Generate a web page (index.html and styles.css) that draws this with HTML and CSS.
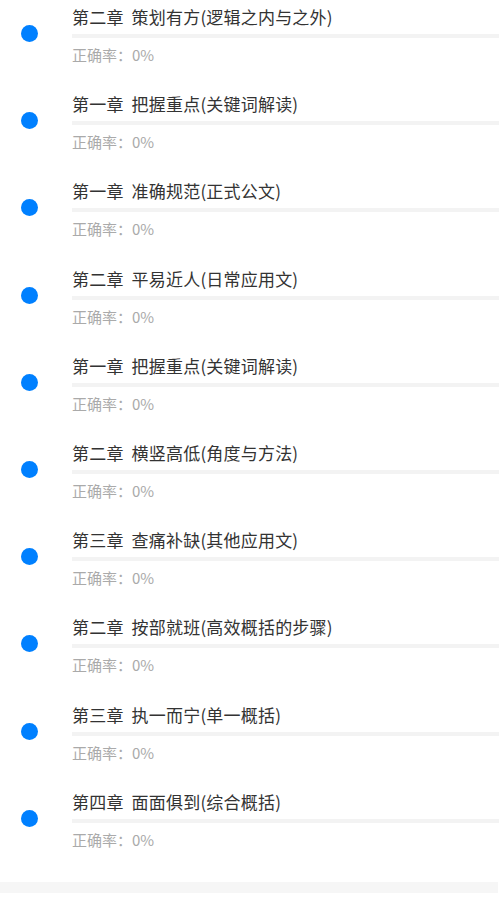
FILE: index.html
```html
<!DOCTYPE html>
<html lang="zh-CN">
<head>
  <meta charset="UTF-8" />
  <meta name="viewport" content="width=device-width, initial-scale=1.0"/>
  <title>章节练习</title>
  <link rel="stylesheet" href="styles.css">
</head>
<body>
  <ul class="chapter-list">
    <li class="chapter">
      <span class="dot"></span>
      <div class="info">
        <div class="title">第二章 策划有方(逻辑之内与之外)</div>
        <div class="bar"><div class="fill" style="width: 0%"></div></div>
        <div class="rate">正确率：0%</div>
      </div>
    </li>
    <li class="chapter">
      <span class="dot"></span>
      <div class="info">
        <div class="title">第一章 把握重点(关键词解读)</div>
        <div class="bar"><div class="fill" style="width: 0%"></div></div>
        <div class="rate">正确率：0%</div>
      </div>
    </li>
    <li class="chapter">
      <span class="dot"></span>
      <div class="info">
        <div class="title">第一章 准确规范(正式公文)</div>
        <div class="bar"><div class="fill" style="width: 0%"></div></div>
        <div class="rate">正确率：0%</div>
      </div>
    </li>
    <li class="chapter">
      <span class="dot"></span>
      <div class="info">
        <div class="title">第二章 平易近人(日常应用文)</div>
        <div class="bar"><div class="fill" style="width: 0%"></div></div>
        <div class="rate">正确率：0%</div>
      </div>
    </li>
    <li class="chapter">
      <span class="dot"></span>
      <div class="info">
        <div class="title">第一章 把握重点(关键词解读)</div>
        <div class="bar"><div class="fill" style="width: 0%"></div></div>
        <div class="rate">正确率：0%</div>
      </div>
    </li>
    <li class="chapter">
      <span class="dot"></span>
      <div class="info">
        <div class="title">第二章 横竖高低(角度与方法)</div>
        <div class="bar"><div class="fill" style="width: 0%"></div></div>
        <div class="rate">正确率：0%</div>
      </div>
    </li>
    <li class="chapter">
      <span class="dot"></span>
      <div class="info">
        <div class="title">第三章 查痛补缺(其他应用文)</div>
        <div class="bar"><div class="fill" style="width: 0%"></div></div>
        <div class="rate">正确率：0%</div>
      </div>
    </li>
    <li class="chapter">
      <span class="dot"></span>
      <div class="info">
        <div class="title">第二章 按部就班(高效概括的步骤)</div>
        <div class="bar"><div class="fill" style="width: 0%"></div></div>
        <div class="rate">正确率：0%</div>
      </div>
    </li>
    <li class="chapter">
      <span class="dot"></span>
      <div class="info">
        <div class="title">第三章 执一而宁(单一概括)</div>
        <div class="bar"><div class="fill" style="width: 0%"></div></div>
        <div class="rate">正确率：0%</div>
      </div>
    </li>
    <li class="chapter">
      <span class="dot"></span>
      <div class="info">
        <div class="title">第四章 面面俱到(综合概括)</div>
        <div class="bar"><div class="fill" style="width: 0%"></div></div>
        <div class="rate">正确率：0%</div>
      </div>
    </li>
  </ul>
  <div class="bottom-strip"></div>
</body>
</html>
```

FILE: styles.css
```css
body {
  margin: 0;
  background: #fff;
  font-family: "Noto Sans CJK SC", "Noto Sans", sans-serif;
}

.chapter-list {
  list-style: none;
  margin: 0;
  padding: 0 0 10px 0;
}

.chapter {
  display: flex;
  align-items: flex-start;
  height: 87.2px;
  box-sizing: border-box;
  padding-top: 6px;
}

.dot {
  flex: none;
  width: 17px;
  height: 17px;
  border-radius: 50%;
  background: #0080ff;
  margin: 19px 0 0 21px;
}

.info {
  flex: 1;
  margin-left: 34px;
}

.title {
  font-size: 17px;
  line-height: 22px;
  word-spacing: 4px;
  letter-spacing: 0.2px;
  color: #333;
}

.bar {
  height: 4px;
  margin-top: 6px;
  background: #f3f3f3;
}

.fill {
  height: 100%;
  background: #0080ff;
}

.rate {
  margin-top: 7px;
  font-size: 15px;
  line-height: 20px;
  color: #aaa;
}

.bottom-strip {
  width: 498px;
  height: 11px;
  background: #f6f6f6;
}
```
